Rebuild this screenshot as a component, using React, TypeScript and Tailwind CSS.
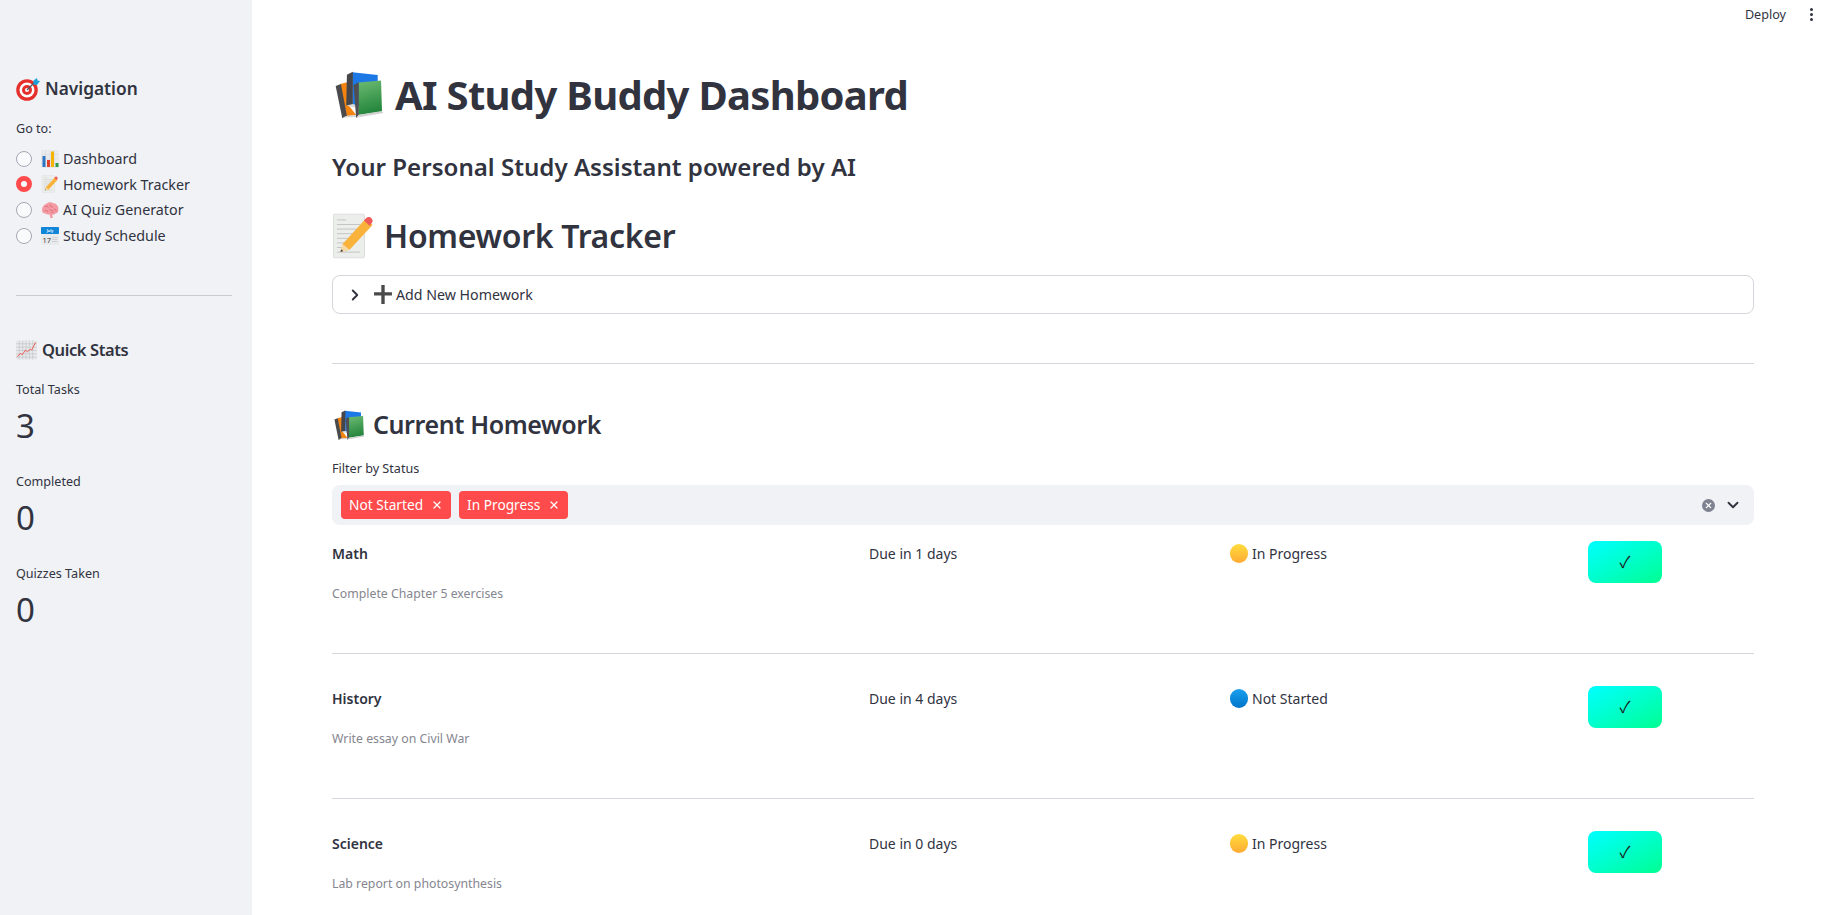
import React from "react";
import { ChevronRight, ChevronDown, X } from "lucide-react";

const BooksIcon = ({ className, id }: { className?: string; id: string }) => (
  <svg viewBox="26 14 148 146" className={className}>
    <defs>
      <linearGradient id={id} x1="0" y1="0" x2="0.2" y2="1">
        <stop offset="0" stopColor="#6dbb72" />
        <stop offset="1" stopColor="#24853c" />
      </linearGradient>
    </defs>
    <path d="M42 52 66 46 70 120 90 146 60 150z" fill="#f5830f" />
    <path d="M28 58 44 52 62 148 48 156z" fill="#4a4a4d" />
    <path d="M48 154 62 148 90 146 90 152z" fill="#d6d6d6" />
    <path d="M78 17 155 25V118H80z" fill="#1c78e4" />
    <path d="M62 24 80 15V115L60 118z" fill="#46464a" />
    <path d="M60 117 80 113 90 116V124z" fill="#d8d8d8" />
    <path d="M97 48 165 42 168 135 97 146z" fill={`url(#${id})`} />
    <path d="M82 55 98 47V146L90 156z" fill="#505054" />
    <path d="M90 154 98 145 168 134 172 140z" fill="#cfd2d0" />
  </svg>
);

const MemoIcon = ({ className }: { className?: string }) => (
  <svg viewBox="0 0 36 40" className={className}>
    <rect x="1" y="1" width="27" height="38" rx="1" fill="#eceeec" stroke="#d0d2d0" strokeWidth="0.6" />
    <path d="M4 6h8M4 10h20M4 14h20M4 18h20M4 22h16M4 26h12M4 30h8M4 34h20" stroke="#b9bcbc" strokeWidth="0.7" />
    <path d="M9 27 29 5l6 5.500L15 32l-8 2z" fill="#f9b23a" />
    <path d="M27.500 6.500 30 4c1.500-1 3-.5 4 .5s1.500 2.500.5 4L32.500 11z" fill="#ee5a5a" />
    <path d="M9 27l6 5-8 2z" fill="#f6d9a8" />
    <path d="M7.800 31.500 9.500 33 7 34z" fill="#444" />
  </svg>
);

const TargetIcon = ({ className }: { className?: string }) => (
  <svg viewBox="0 0 24 24" className={className}>
    <circle cx="11" cy="13" r="10.800" fill="#e5302c" />
    <circle cx="11" cy="13" r="7.500" fill="#fff" />
    <circle cx="11" cy="13" r="5" fill="#e5302c" />
    <circle cx="11" cy="13" r="2" fill="#fff" />
    <path d="M11 13 19 5" stroke="#4a5a64" strokeWidth="1.200" />
    <path d="M17.500 3.500 21 1l.5 2.500L24 4l-3 4-3.500-.5z" fill="#1ba1d8" />
  </svg>
);

const BarChartIcon = ({ className }: { className?: string }) => (
  <svg viewBox="0 0 18 18" className={className}>
    <rect width="18" height="18" fill="#e9eaec" />
    <path d="M0 4.500h18M0 9h18M0 13.500h18M4.500 0v18M9 0v18M13.500 0v18" stroke="#cfd2d6" strokeWidth="0.4" />
    <rect x="1.500" y="6" width="3" height="11" fill="#2f74c0" />
    <rect x="6" y="10" width="3" height="7" fill="#e2402f" />
    <rect x="10" y="1.500" width="3" height="15.500" fill="#f4b400" />
    <rect x="14.500" y="13" width="3" height="4" fill="#2f9e44" />
  </svg>
);

const BrainIcon = ({ className }: { className?: string }) => (
  <svg viewBox="0 0 18 18" className={className}>
    <path d="M1 9c0-3 2-5.500 4-6 2-2 5.500-2.200 7.500-.7 3 .2 5.200 3 4.800 5.700.5 2.500-1 4.500-3.300 4.700-.8 1-2 1.200-3 .8l1 3.200-2.500.5-1-4c-1.500.5-3 .2-4-.7C2.500 13 1 11.500 1 9z" fill="#f39aa3" />
    <path d="M4 6c1.500-1.500 3-.5 3.500.5M9 3.500c0 2 1.500 3 3 2.500M13 8c1.500 0 2.500 1 2 2.500M3.500 10c1.500-1 3-.5 3.500 1M8.500 8c1 1.500 2.500 2 4 1.500M10 12c.8-.8 1.500-1 2.500-.8" stroke="#d9606e" strokeWidth="0.7" fill="none" />
  </svg>
);

const CalendarIcon = ({ className }: { className?: string }) => (
  <svg viewBox="0 0 18 18" className={className}>
    <rect width="18" height="18" rx="0.800" fill="#e9eaec" />
    <rect width="18" height="7" rx="0.800" fill="#0f86d8" />
    <text x="9" y="4.800" textAnchor="middle" fontSize="3.600" fontWeight="700" fill="#e6f3fc">July</text>
    <text x="1.500" y="15.500" fontSize="7.500" fill="#3a3a3a">17</text>
    <path d="M11 10.500h5.500M11 12.500h5.500M11 14.500h5.500" stroke="#c6c8cc" strokeWidth="0.800" />
  </svg>
);

const ChartUpIcon = ({ className }: { className?: string }) => (
  <svg viewBox="0 0 22 20" className={className}>
    <rect width="22" height="20" fill="#e8e9eb" />
    <path d="M0 3.500h22M0 7h22M0 10.500h22M0 14h22M0 17.500h22M3.500 0v20M7 0v20M10.500 0v20M14 0v20M17.500 0v20" stroke="#b6b8bb" strokeWidth="0.5" />
    <path d="M1.500 17l3-3.500 2 1.500 3.500-5 2 2 3-3 1.500 1L20.500 2" stroke="#ea5a50" strokeWidth="1" fill="none" />
  </svg>
);

const PlusIcon = () => (
  <svg viewBox="0 0 16 17" className="w-[18px] h-[19px]">
    <path d="M6.500 0h3v6.500H16v3H9.500V17h-3V9.500H0v-3h6.500z" fill="#4a4a4a" />
  </svg>
);

const navItems = [
  { label: "Dashboard", icon: BarChartIcon, selected: false },
  { label: "Homework Tracker", icon: MemoIcon, selected: true },
  { label: "AI Quiz Generator", icon: BrainIcon, selected: false },
  { label: "Study Schedule", icon: CalendarIcon, selected: false },
];

const stats = [
  { label: "Total Tasks", value: "3" },
  { label: "Completed", value: "0" },
  { label: "Quizzes Taken", value: "0" },
];

const homework = [
  { subject: "Math", due: "Due in 1 days", status: "In Progress", note: "Complete Chapter 5 exercises" },
  { subject: "History", due: "Due in 4 days", status: "Not Started", note: "Write essay on Civil War" },
  { subject: "Science", due: "Due in 0 days", status: "In Progress", note: "Lab report on photosynthesis" },
];

const Tag = ({ label }: { label: string }) => (
  <div className="flex items-center h-7 pl-2 pr-[8px] gap-[8px] bg-[#ff4b4b] rounded text-white text-[13.700px]">
    <span>{label}</span>
    <X className="w-3 h-3" strokeWidth={2.5} />
  </div>
);

const App = () => {
  return (
    <div className="relative flex h-[915px] overflow-hidden bg-white text-[#31333f] font-['Noto_Sans',sans-serif]">
      <aside className="w-[252px] shrink-0 bg-[#f0f2f6] pl-4 pr-5 pt-[74px]">
        <h2 className="flex items-center gap-[5px] h-[30px] text-[17.300px] font-semibold">
          <TargetIcon className="w-6 h-6" />
          Navigation
        </h2>
        <div className="mt-[15px] h-5 leading-5 text-[12.600px]">Go to:</div>
        <ul className="mt-[7px]">
          {navItems.map((item) => {
            const Icon = item.icon;
            return (
              <li key={item.label} className="flex items-center h-[25.600px] text-[14.300px]">
                {item.selected ? (
                  <span className="w-4 h-4 rounded-full border-[5px] border-[#ff4b4b] bg-white" />
                ) : (
                  <span className="w-4 h-4 rounded-full border border-[#a3a8b4] bg-white/60" />
                )}
                <Icon className="w-[18px] h-[18px] ml-[9px] mr-[4px]" />
                {item.label}
              </li>
            );
          })}
        </ul>
        <div className="mt-[47px] h-px bg-[#c9cbd1]" />
        <h2 className="flex items-center gap-[5px] mt-[39px] h-[30px] text-[16.500px] font-semibold tracking-[-0.4px]">
          <ChartUpIcon className="w-[21px] h-[20px]" />
          Quick Stats
        </h2>
        <div className="mt-[15px]">
          {stats.map((s) => (
            <div key={s.label} className="h-[92px]">
              <div className="h-5 leading-5 text-[12.600px]">{s.label}</div>
              <div className="mt-[6px] h-10 leading-10 text-[33px]">{s.value}</div>
            </div>
          ))}
        </div>
      </aside>

      <main className="flex-1 pl-20 pr-[82px] pt-[65px]">
        <h1 className="flex items-center gap-[11px] h-[60px] text-[40px] font-bold leading-none tracking-[-0.7px]">
          <BooksIcon id="books-lg" className="ml-[3px] w-[49px] h-[49px]" />
          AI Study Buddy Dashboard
        </h1>
        <p className="mt-6 h-9 leading-9 text-[24.100px] font-semibold">Your Personal Study Assistant powered by AI</p>
        <h2 className="flex items-center gap-[10px] mt-[27px] h-12 text-[32px] font-semibold tracking-[-0.3px]">
          <MemoIcon className="w-[42px] h-[46px]" />
          Homework Tracker
        </h2>
        <div className="flex items-center mt-[15px] h-[39px] border border-[#d5d6db] rounded-lg pl-[13px] text-[14.200px]">
          <ChevronRight className="w-[18px] h-[18px]" strokeWidth={2.5} />
          <span className="ml-[10px] mr-[4px]"><PlusIcon /></span>
          Add New Homework
        </div>
        <div className="mt-[49px] h-px bg-[#d5d6db]" />
        <h3 className="flex items-center gap-[8px] mt-[41px] h-10 text-[25px] font-semibold tracking-[-0.4px]">
          <BooksIcon id="books-sm" className="ml-[2px] w-[31px] h-[31px]" />
          Current Homework
        </h3>
        <div className="mt-[14px] h-5 leading-5 text-[12.600px]">Filter by Status</div>
        <div className="flex items-center justify-between mt-[6px] h-10 rounded-lg bg-[#f0f2f6] pl-[9px] pr-[12px]">
          <div className="flex items-center gap-2">
            <Tag label="Not Started" />
            <Tag label="In Progress" />
          </div>
          <div className="flex items-center gap-[9px]">
            <span className="flex items-center justify-center w-[13px] h-[13px] rounded-full bg-[#7f8290]">
              <X className="w-[9px] h-[9px] text-white" strokeWidth={3} />
            </span>
            <ChevronDown className="w-[18px] h-[18px]" strokeWidth={2.5} />
          </div>
        </div>
        <div className="mt-4">
          {homework.map((row) => (
            <div key={row.subject} className="flex h-[113px] mb-[32px] border-b border-[#d5d6db] last:border-b-0">
              <div className="w-[537px] pt-px">
                <div className="h-6 leading-6 text-[14px] font-semibold">{row.subject}</div>
                <div className="mt-[18px] h-5 leading-5 text-[12.300px] text-[#85868f]">{row.note}</div>
              </div>
              <div className="w-[361px] pt-px h-6 leading-6 text-[14px]">{row.due}</div>
              <div className="flex items-center gap-[4px] w-[358px] h-6 text-[14px]">
                {row.status === "In Progress" ? (
                  <span className="w-[18px] h-[19px] rounded-full bg-gradient-to-b from-[#fedc3d] to-[#fdaa33]" />
                ) : (
                  <span className="w-[18px] h-[19px] rounded-full bg-gradient-to-b from-[#1aa0ee] to-[#0074c9]" />
                )}
                {row.status}
              </div>
              <button className="flex items-center justify-center pb-[2px] w-[74px] h-[42px] rounded-lg bg-gradient-to-br from-[#00ffff] to-[#00ff90] text-[16px] font-['Noto_Sans_CJK_SC',sans-serif] text-[#1a1c24]">
                ✓
              </button>
            </div>
          ))}
        </div>
      </main>

      <div className="absolute top-0 right-0 flex items-center h-[29px] pr-[23px] text-[12.600px]">
        <span className="pt-[2px]">Deploy</span>
        <span className="flex flex-col gap-[2px] ml-[24px]">
          <span className="w-[3px] h-[3px] rounded-full bg-[#31333f]" />
          <span className="w-[3px] h-[3px] rounded-full bg-[#31333f]" />
          <span className="w-[3px] h-[3px] rounded-full bg-[#31333f]" />
        </span>
      </div>
    </div>
  );
};

export default App;
